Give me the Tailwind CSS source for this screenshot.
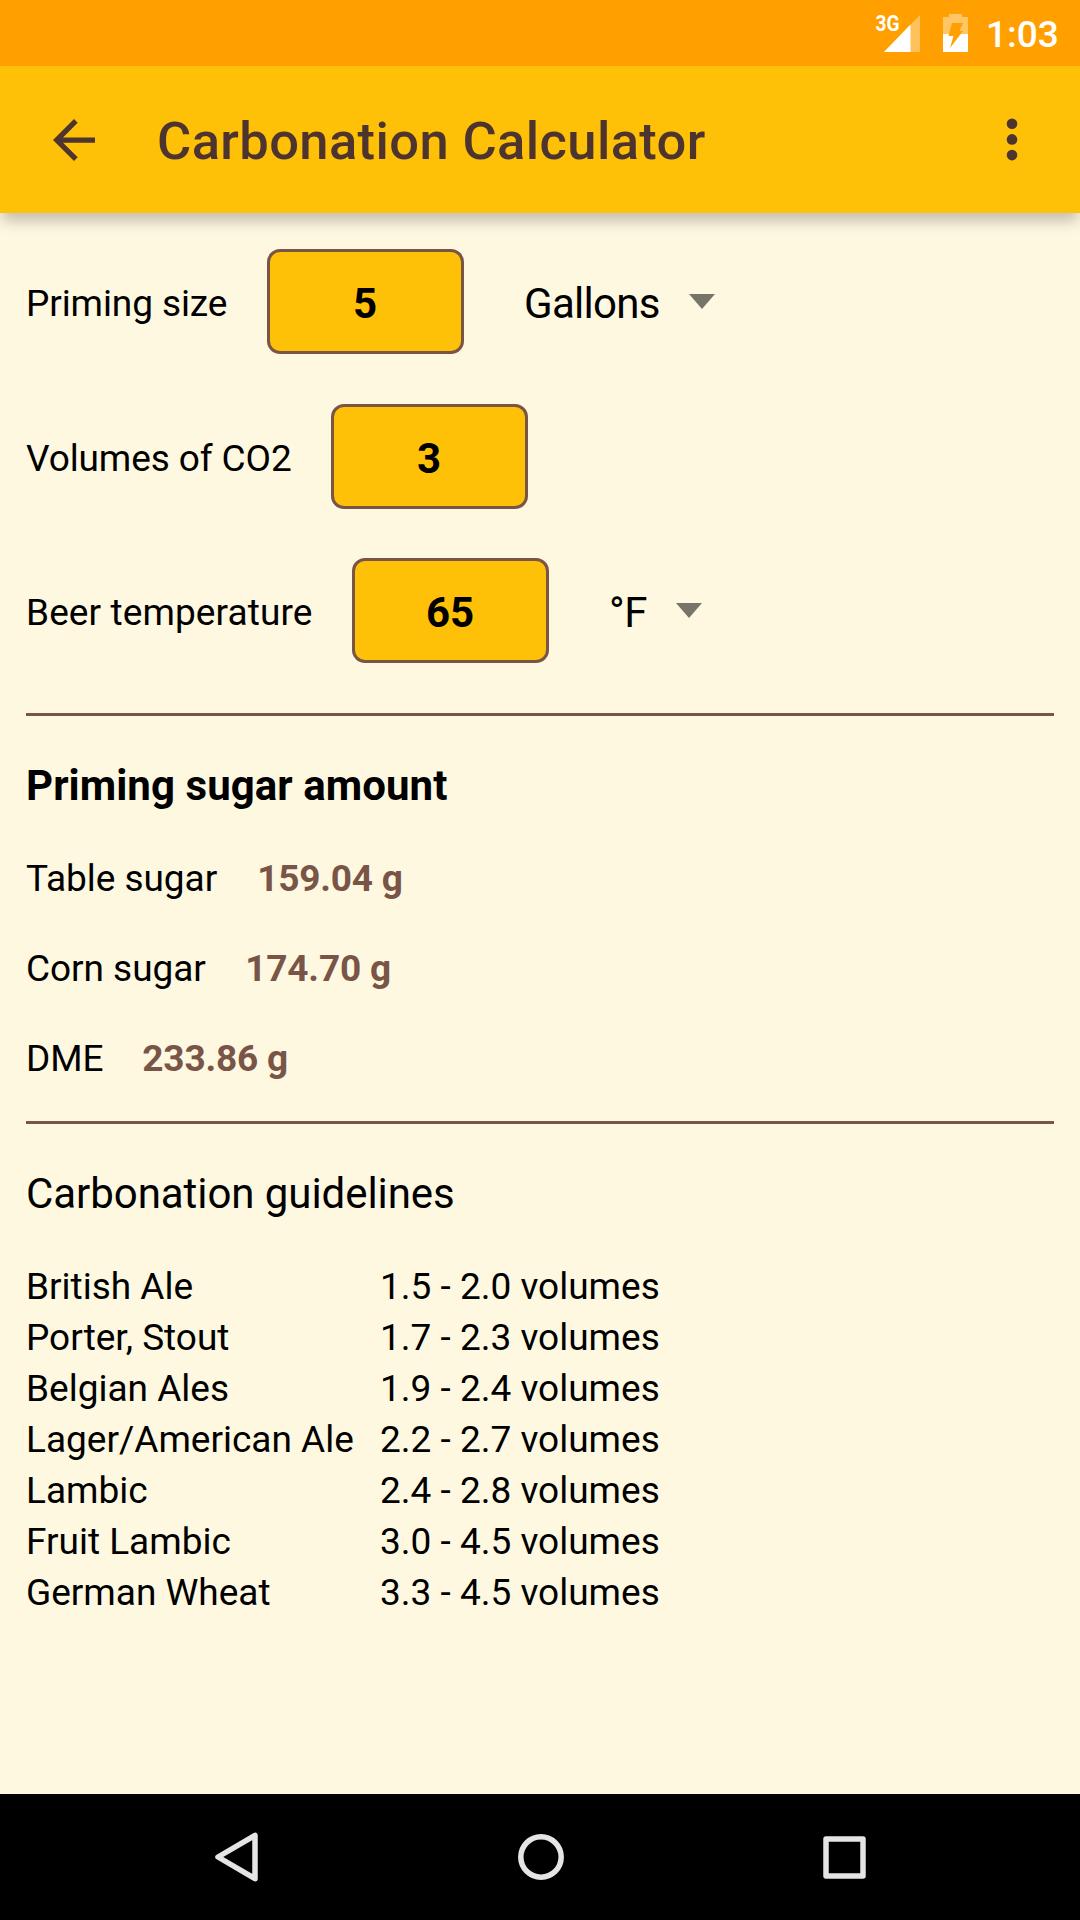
<!DOCTYPE html>
<html lang="en"><head><meta charset="utf-8"><title>Carbonation Calculator</title>
<script src="https://cdn.jsdelivr.net/npm/@tailwindcss/browser@4"></script></head>
<body class="w-[1080px] h-[1920px] flex flex-col overflow-hidden bg-[#fff8e1] text-black font-['Roboto',sans-serif] text-[37px] leading-[51px]">
<div class="relative z-10 h-[66px] shrink-0 bg-[#ffa000] flex justify-end items-center text-white pr-[21px]">
<svg class="w-[46px] h-[38px] overflow-visible" viewBox="0 0 46 38"><path d="M9 38L45 1V38Z" fill="#fff" opacity=".35"/><path d="M9 38L35.500 10.500V38Z" fill="#fff"/><text x="0.500" y="17" font-size="22" font-weight="700" fill="#fff" textLength="24" lengthAdjust="spacingAndGlyphs">3G</text></svg>
<svg class="w-[25px] h-[38px] ml-[22px]" viewBox="0 0 25 38"><path d="M6 0h13v3h6v17H0V3h6z" fill="#fff" opacity=".4"/><path d="M0 20h25v18H0z" fill="#fff"/><path d="M9 9h11l-3.500 8H20L7 34l3.500-12H5.500z" fill="#ffa000"/></svg>
<span class="ml-[18px] pt-[3px] w-[73px] text-[37px] font-medium">1:03</span></div>
<header class="h-[147px] shrink-0 bg-[#ffc107] flex items-center shadow-[0_10px_14px_-2px_rgba(0,0,0,.24)] text-[#4e342e]">
<svg class="w-[42px] h-[42px] ml-[52.500px]" viewBox="4 4 16 16" fill="currentColor"><path d="M20 11H7.830l5.590-5.590L12 4l-8 8 8 8 1.410-1.410L7.830 13H20z"/></svg>
<h1 class="ml-[62.500px] pt-[4px] text-[52.5px] tracking-[0.38px] font-medium">Carbonation Calculator</h1>
<svg class="w-[12px] h-[44px] ml-auto mr-[62px]" viewBox="0 0 12 44" fill="currentColor"><circle cx="6" cy="5.700" r="5.300"/><circle cx="6" cy="21.400" r="5.300"/><circle cx="6" cy="37.100" r="5.300"/></svg></header>
<main class="flex-1 px-[26px] pt-[36px]">
<div class="flex items-center h-[104px]"><span class="w-[201px] pt-1 tracking-[-0.1px] whitespace-nowrap">Priming size</span><div class="ml-10 w-[197px] h-[105px] rounded-[13px] border-[3px] border-[#795548] bg-[#ffc107] flex items-center justify-center pt-[5px] pr-[1px] font-bold text-[42px]">5</div><span class="ml-[60px] w-[165px] pt-[5px] text-[42px] tracking-[-0.7px]">Gallons</span><svg class="w-[26px] h-[15px]" viewBox="0 0 26 15"><path d="M0 0h26L13 15z" fill="#77746a"/></svg></div>
<div class="flex items-center h-[104px] mt-[51px]"><span class="w-[265px] pt-1 tracking-[-0.1px] whitespace-nowrap">Volumes of CO2</span><div class="ml-10 w-[197px] h-[105px] rounded-[13px] border-[3px] border-[#795548] bg-[#ffc107] flex items-center justify-center pt-[5px] pr-[1px] font-bold text-[42px]">3</div></div>
<div class="flex items-center h-[104px] mt-[50px]"><span class="w-[286px] pt-1 tracking-[0.1px] whitespace-nowrap">Beer temperature</span><div class="ml-10 w-[197px] h-[105px] rounded-[13px] border-[3px] border-[#795548] bg-[#ffc107] flex items-center justify-center pt-[5px] pr-[1px] font-bold text-[42px]">65</div><span class="ml-[60px] w-[67px] pt-[5px] text-[42px] tracking-[-0.5px]">°F</span><svg class="w-[26px] h-[15px]" viewBox="0 0 26 15"><path d="M0 0h26L13 15z" fill="#77746a"/></svg></div>
<hr class="mt-[51px] border-t-[3px] border-[#795548]">
<h2 class="mt-[44px] text-[42px] font-bold tracking-[0.06px]">Priming sugar amount</h2>
<div class="mt-[42px] flex gap-[40px]"><span class="tracking-[-0.05px]">Table sugar</span><b class="text-[#795548] tracking-[-0.2px]">159.04 g</b></div>
<div class="mt-[39px] flex gap-[39.500px]"><span class="tracking-[-0.05px]">Corn sugar</span><b class="text-[#795548] tracking-[-0.2px]">174.70 g</b></div>
<div class="mt-[39px] flex gap-[39px]"><span class="tracking-[-0.1px]">DME</span><b class="text-[#795548] tracking-[-0.2px]">233.86 g</b></div>
<hr class="mt-[37px] border-t-[3px] border-[#795548]">
<h2 class="mt-[44px] text-[42px] tracking-[-0.06px]">Carbonation guidelines</h2>
<div class="mt-[42px] grid grid-cols-[354px_auto]">
<span>British Ale</span><span>1.5 - 2.0 volumes</span><span>Porter, Stout</span><span>1.7 - 2.3 volumes</span><span>Belgian Ales</span><span>1.9 - 2.4 volumes</span><span>Lager/American Ale</span><span>2.2 - 2.7 volumes</span><span>Lambic</span><span>2.4 - 2.8 volumes</span><span>Fruit Lambic</span><span>3.0 - 4.5 volumes</span><span>German Wheat</span><span>3.3 - 4.5 volumes</span></div>
</main>
<nav class="h-[126px] shrink-0 bg-black flex items-center pl-[213px] text-[#e5e5e5]">
<svg class="w-[48px] h-[52px]" viewBox="0 0 48 52" fill="none" stroke="currentColor" stroke-width="5.500" stroke-linejoin="round"><path d="M5 26L42 4.300V47.700Z"/></svg>
<svg class="w-[46px] h-[46px] ml-[256.500px]" viewBox="0 0 46 46" fill="none" stroke="currentColor" stroke-width="5.500"><circle cx="23" cy="23" r="20.200"/></svg>
<svg class="w-[43px] h-[43px] ml-[259.500px]" viewBox="0 0 43 43" fill="none" stroke="currentColor" stroke-width="5.500" stroke-linejoin="round"><path d="M3 3H40V40H3Z"/></svg>
</nav>
</body></html>
